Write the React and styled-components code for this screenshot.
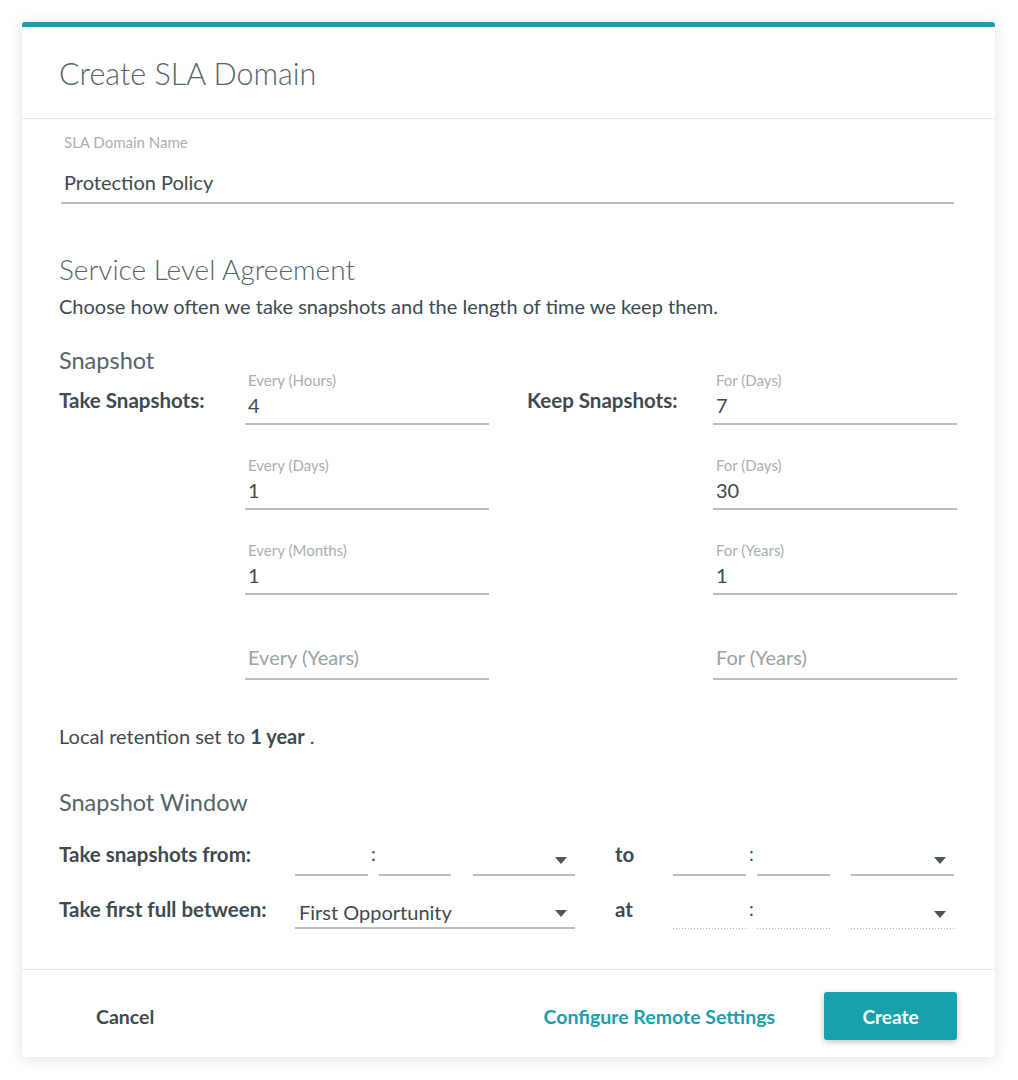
import React from 'react'
import styled, { createGlobalStyle } from 'styled-components'

const GlobalStyle = createGlobalStyle`
  body {
    margin: 0;
    background: #ffffff;
    font-family: Lato, "Open Sans", sans-serif;
    color: #3e4a4f;
  }
`

const Page = styled.div`
  padding: 22px 23px 22px 22px;
`

const Card = styled.div`
  width: 973px;
  background: #fff;
  border-top: 5px solid #18a0ab;
  border-radius: 3px 3px 2px 2px;
  box-shadow: 0 2px 14px rgba(0, 0, 0, 0.12);
`

const Header = styled.div`
  height: 91px;
  display: flex;
  align-items: center;
  padding: 0 37px;
  border-bottom: 1px solid #e6e9ea;
`

const Title = styled.h1`
  margin: 0;
  font-size: 30.5px;
  font-weight: 300;
  color: #56646a;
`

const Body = styled.div`
  padding: 14px 37px 40px;
  border-bottom: 1px solid #e6e9ea;
`

const FieldBox = styled.div`
  box-sizing: border-box;
  width: ${p => p.width || 'auto'};
  margin-left: ${p => p.indent || 0};
  display: flex;
  flex-direction: column;
  border-bottom: 2px solid #b8bfc3;
  padding-bottom: ${p => p.padBottom || '5px'};
  padding-left: ${p => p.padLeft || '3px'};
`

const FieldLabel = styled.div`
  font-size: 15px;
  line-height: ${p => p.lh || '16px'};
  color: #a7afb3;
  margin-bottom: ${p => p.gap || '4px'};
  height: ${p => p.lh || '16px'};
`

const FieldValue = styled.div`
  font-size: 20px;
  line-height: 26px;
  height: 26px;
  color: ${p => (p.placeholder ? '#98a2a7' : '#3e4a4f')};
  margin-top: ${p => (p.placeholder ? '-3px' : '0')};
  padding-bottom: ${p => (p.placeholder ? '3px' : '0')};
`

const SectionTitle = styled.h2`
  margin: ${p => p.margin || '0'};
  font-size: ${p => p.size || '28px'};
  line-height: ${p => p.lh || '34px'};
  font-weight: ${p => p.weight || 300};
  color: #56646a;
`

const Text = styled.p`
  margin: ${p => p.margin || '0'};
  font-size: 20px;
  line-height: 24px;
  color: #3e4a4f;

  b {
    font-weight: 700;
  }
`

const SnapshotGrid = styled.div`
  display: grid;
  grid-template-columns: 186px 244px 38px 186px 244px;
  row-gap: 32px;
`

const RowLabel = styled.div`
  font-size: 20.5px;
  line-height: 24px;
  font-weight: 700;
  padding-top: 16px;
  grid-column: ${p => p.col};
  white-space: nowrap;
`

const WindowRows = styled.div`
  display: flex;
  flex-direction: column;
  gap: 15px;
`

const WindowRow = styled.div`
  display: flex;
  align-items: flex-end;
`

const WindowLabel = styled.div`
  width: 236px;
  flex-shrink: 0;
  font-size: 20.5px;
  line-height: 24px;
  font-weight: 700;
  align-self: flex-start;
  padding-top: ${p => p.top || '4px'};
  white-space: nowrap;
`

const Connector = styled.div`
  width: 58px;
  margin-left: 40px;
  flex-shrink: 0;
  font-size: 20.5px;
  line-height: 24px;
  font-weight: 700;
  align-self: flex-start;
  padding-top: ${p => p.top || '4px'};
`

const TimeGroup = styled.div`
  width: ${p => p.width};
  display: flex;
  align-items: flex-end;
`

const TimeBox = styled.div`
  width: ${p => p.width};
  height: 38px;
  flex-shrink: 0;
  ${p =>
    p.dotted
      ? `background: repeating-linear-gradient(to right, #a9b1b5 0 1px, transparent 1px 3px) left bottom / 100% 1px no-repeat;`
      : `border-bottom: 2px solid #b8bfc3;`}
  box-sizing: border-box;
`

const Colon = styled.span`
  width: 11px;
  flex-shrink: 0;
  align-self: flex-start;
  text-align: center;
  font-size: 19px;
  line-height: 24px;
  padding-top: ${p => p.top || '4px'};
  color: #3e4a4f;
`

const Select = styled.div`
  width: ${p => p.width};
  margin-left: ${p => p.indent || 0};
  height: 38px;
  flex-shrink: 0;
  box-sizing: border-box;
  display: flex;
  align-items: center;
  justify-content: space-between;
  padding: 5px 8px 0 4px;
  font-size: 20px;
  color: #3e4a4f;
  ${p =>
    p.dotted
      ? `background: repeating-linear-gradient(to right, #a9b1b5 0 1px, transparent 1px 3px) left bottom / 100% 1px no-repeat;`
      : `border-bottom: 2px solid #b8bfc3;`}
`

const Caret = styled.span`
  width: 0;
  height: 0;
  margin-left: auto;
  margin-top: 3px;
  border-left: 6px solid transparent;
  border-right: 6px solid transparent;
  border-top: 7px solid #4a565b;
`

const Footer = styled.div`
  display: flex;
  align-items: center;
  padding: 22px 38px 17px 74px;
`

const TextButton = styled.button`
  border: none;
  background: none;
  padding: 0;
  font-family: inherit;
  font-size: 19.5px;
  font-weight: 700;
  color: ${p => (p.primary ? '#18a0ab' : '#3e4a4f')};
  margin-left: ${p => p.left || 0};
  margin-right: ${p => p.right || 0};
  cursor: pointer;
`

const PrimaryButton = styled.button`
  width: 133px;
  height: 48px;
  border: none;
  border-radius: 3px;
  background: #18a0ab;
  color: #fff;
  font-family: inherit;
  font-size: 19px;
  font-weight: 700;
  box-shadow: 0 2px 6px rgba(0, 0, 0, 0.25);
  cursor: pointer;
`

function Field({ label, value, placeholder, width }) {
  return (
    <FieldBox width={width}>
      <FieldLabel>{label}</FieldLabel>
      <FieldValue placeholder={placeholder ? 1 : 0}>{value || placeholder}</FieldValue>
    </FieldBox>
  )
}

function TimePicker({ width, dotted, narrow, top }) {
  return (
    <TimeGroup width={width}>
      <TimeBox width="73px" dotted={dotted} />
      <Colon top={top}>:</Colon>
      <TimeBox width={narrow ? '72px' : '73px'} dotted={dotted} />
      <Select width={narrow ? '102px' : '103px'} indent={narrow ? '22px' : '21px'} dotted={dotted}>
        <Caret />
      </Select>
    </TimeGroup>
  )
}

const takeFields = [
  { label: 'Every (Hours)', value: '4' },
  { label: 'Every (Days)', value: '1' },
  { label: 'Every (Months)', value: '1' },
  { placeholder: 'Every (Years)' },
]

const keepFields = [
  { label: 'For (Days)', value: '7' },
  { label: 'For (Days)', value: '30' },
  { label: 'For (Years)', value: '1' },
  { placeholder: 'For (Years)' },
]

export default function App() {
  return (
    <Page>
      <GlobalStyle />
      <Card>
        <Header>
          <Title>Create SLA Domain</Title>
        </Header>
        <Body>
          <FieldBox indent="2px" width="893px" padBottom="7px">
            <FieldLabel lh="18px" gap="18px">SLA Domain Name</FieldLabel>
            <FieldValue>Protection Policy</FieldValue>
          </FieldBox>

          <SectionTitle margin="48px 0 0">Service Level Agreement</SectionTitle>
          <Text margin="8px 0 0">Choose how often we take snapshots and the length of time we keep them.</Text>

          <SectionTitle size="23.5px" lh="24px" weight={400} margin="30px 0 0">Snapshot</SectionTitle>
          <SnapshotGrid>
            {takeFields.map((f, i) => (
              <React.Fragment key={i}>
                {i === 0 ? <RowLabel col="1">Take Snapshots:</RowLabel> : <div />}
                <Field {...f} />
                <div />
                {i === 0 ? <RowLabel col="4">Keep Snapshots:</RowLabel> : <div />}
                <Field {...keepFields[i]} />
              </React.Fragment>
            ))}
          </SnapshotGrid>

          <Text margin="44px 0 0">
            Local retention set to <b>1 year</b> .
          </Text>

          <SectionTitle size="23.5px" lh="28px" weight={400} margin="40px 0 22px">Snapshot Window</SectionTitle>

          <WindowRows>
            <WindowRow>
              <WindowLabel>Take snapshots from:</WindowLabel>
              <TimePicker width="280px" narrow />
              <Connector>to</Connector>
              <TimePicker width="281px" />
            </WindowRow>
            <WindowRow>
              <WindowLabel top="6px">Take first full between:</WindowLabel>
              <Select width="280px">
                First Opportunity
                <Caret />
              </Select>
              <Connector top="6px">at</Connector>
              <TimePicker width="281px" dotted top="6px" />
            </WindowRow>
          </WindowRows>
        </Body>
        <Footer>
          <TextButton>Cancel</TextButton>
          <TextButton primary left="auto" right="49px">Configure Remote Settings</TextButton>
          <PrimaryButton>Create</PrimaryButton>
        </Footer>
      </Card>
    </Page>
  )
}
